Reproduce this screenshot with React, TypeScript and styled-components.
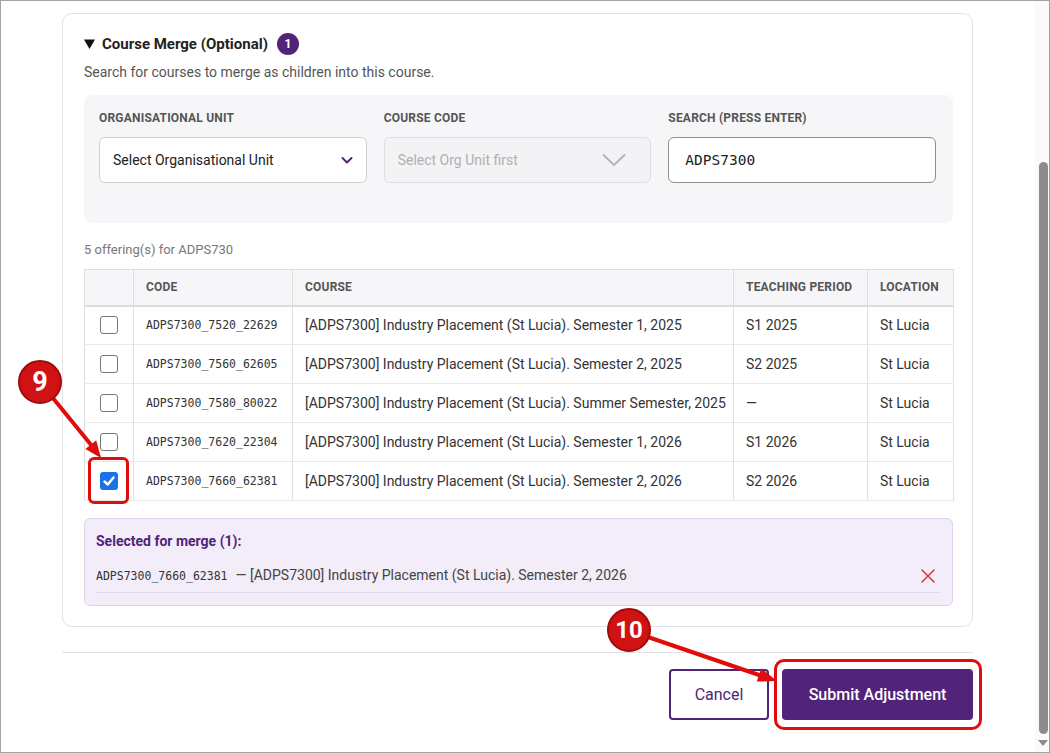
import React from "react";
import styled, { createGlobalStyle, css } from "styled-components";

const GlobalStyle = createGlobalStyle`
  html, body { margin: 0; padding: 0; background: #ffffff; }
  body { font-family: Roboto, "Liberation Sans", Arial, sans-serif; color: #222; }
  * { box-sizing: border-box; }
`;

const PURPLE = "#51247a";
const MONO = `"DejaVu Sans Mono", "Liberation Mono", monospace`;

const Root = styled.div`
  position: relative;
  width: 1050px;
  height: 753px;
  overflow: hidden;
`;

const Window = styled.div`
  width: 1050px;
  height: 753px;
  border: 1px solid #a3a3a3;
  display: flex;
  background: #fff;
`;

const Main = styled.main`
  flex: 1;
  padding: 12px 0 0 61px;
`;

const Scrollbar = styled.div`
  width: 14px;
  background: #fafafa;
  display: flex;
  flex-direction: column;
  align-items: center;
  padding: 161px 0 0 2px;
`;

const Thumb = styled.div`
  width: 9px;
  height: 572px;
  border-radius: 5px;
  background: #8c8c8c;
`;

const DownArrow = styled.div`
  margin-top: 6px;
  width: 0;
  height: 0;
  border-left: 5px solid transparent;
  border-right: 5px solid transparent;
  border-top: 6px solid #8c8c8c;
`;

const Card = styled.section`
  width: 911px;
  border: 1px solid #e2e2e2;
  border-radius: 10px;
  padding: 19px 19px 20px 21px;
`;

const Header = styled.div`
  display: flex;
  align-items: center;
  height: 22px;
`;

const Caret = styled.span`
  display: flex;
  width: 11px;
  margin-right: 7px;
`;

const Title = styled.h3`
  margin: 0;
  font-size: 15px;
  font-weight: 700;
  color: #222;
`;

const CountBadge = styled.span`
  margin-left: 9px;
  width: 22px;
  height: 22px;
  border-radius: 50%;
  background: ${PURPLE};
  color: #fff;
  font-size: 12px;
  font-weight: 700;
  display: flex;
  align-items: center;
  justify-content: center;
`;

const Subtitle = styled.p`
  margin: 7px 0 0;
  font-size: 14px;
  line-height: 20px;
  color: #555;
`;

const FilterPanel = styled.div`
  margin-top: 13px;
  background: #f6f6f9;
  border-radius: 8px;
  padding: 15px 17px 40px 15px;
  display: grid;
  grid-template-columns: repeat(3, 1fr);
  column-gap: 17px;
`;

const Field = styled.div`
  display: flex;
  flex-direction: column;
`;

const Label = styled.label`
  font-size: 12px;
  line-height: 16px;
  font-weight: 700;
  color: #555;
  letter-spacing: 0.2px;
  text-transform: uppercase;
  margin-bottom: 11px;
`;

const SelectBox = styled.div<{ $disabled?: boolean }>`
  height: 46px;
  border-radius: 6px;
  display: flex;
  align-items: center;
  justify-content: space-between;
  padding: 0 12px 0 13px;
  font-size: 14px;
  ${(p) =>
    p.$disabled
      ? css`
          background: #f3f3f5;
          border: 1px solid #dedee2;
          color: #b0b0b0;
          padding-right: 24px;
        `
      : css`
          background: #fff;
          border: 1px solid #cfcfd4;
          color: #222;
        `}
`;

const SearchInput = styled.div`
  height: 46px;
  border-radius: 6px;
  background: #fff;
  border: 1px solid #8e8e8e;
  display: flex;
  align-items: center;
  padding: 0 16px;
  font-family: ${MONO};
  font-size: 14.5px;
  color: #222;
`;

const ResultCount = styled.div`
  margin-top: 20px;
  font-size: 13px;
  line-height: 14px;
  color: #777;
`;

const Table = styled.table`
  margin-top: 12px;
  width: 869px;
  border-collapse: collapse;
  table-layout: fixed;
  border: 1px solid #dedede;
`;

const Th = styled.th`
  height: 36px;
  background: #f6f6f9;
  text-align: left;
  font-size: 12px;
  font-weight: 700;
  color: #555;
  letter-spacing: 0.2px;
  padding: 0 12px;
  border-right: 1px solid #dedede;
  border-bottom: 2px solid #dcdcdc;
`;

const Td = styled.td<{ $mono?: boolean; $center?: boolean }>`
  height: 39px;
  padding: 0 12px;
  font-size: 14px;
  color: #333;
  border-right: 1px solid #e0e0e0;
  border-bottom: 1px solid #e8e8e8;
  white-space: nowrap;
  ${(p) =>
    p.$mono &&
    css`
      font-family: ${MONO};
      font-size: 11.5px;
      color: #333;
    `}
  ${(p) =>
    p.$center &&
    css`
      text-align: center;
      padding: 0;
    `}
`;

const CheckBox = styled.span<{ $checked?: boolean }>`
  display: inline-flex;
  align-items: center;
  justify-content: center;
  width: 18px;
  height: 18px;
  border-radius: 3px;
  vertical-align: middle;
  ${(p) =>
    p.$checked
      ? css`
          background: #1a72e8;
        `
      : css`
          background: #fff;
          border: 1px solid #777;
        `}
`;

const SelectedPanel = styled.div`
  margin-top: 17px;
  background: #f2edf8;
  border: 1px solid #dcd2ea;
  border-radius: 6px;
  padding: 12px 12px 12px 11px;
`;

const SelectedTitle = styled.div`
  font-size: 14px;
  line-height: 20px;
  font-weight: 700;
  color: ${PURPLE};
`;

const SelectedItem = styled.div`
  margin-top: 8px;
  padding: 6px 0;
  border-bottom: 1px solid #e0d9ea;
  display: flex;
  align-items: center;
  justify-content: space-between;
  font-size: 14px;
  line-height: 20px;
  color: #444;
`;

const Code = styled.span`
  font-family: ${MONO};
  font-size: 11.5px;
  color: #333;
  margin-right: 8px;
`;

const RemoveButton = styled.button`
  border: 0;
  background: none;
  padding: 0;
  margin-right: 4px;
  display: flex;
  cursor: pointer;
`;

const Footer = styled.footer`
  width: 911px;
  margin-top: 25px;
  border-top: 1px solid #e2e2e2;
  padding-top: 16px;
  display: flex;
  justify-content: flex-end;
  gap: 13px;
`;

const Button = styled.button<{ $primary?: boolean }>`
  height: 51px;
  border-radius: 4px;
  font-family: Roboto, "Liberation Sans", sans-serif;
  font-size: 16px;
  cursor: pointer;
  ${(p) =>
    p.$primary
      ? css`
          width: 191px;
          background: ${PURPLE};
          border: 0;
          color: #fff;
          font-weight: 500;
        `
      : css`
          width: 100px;
          background: #fff;
          border: 2px solid ${PURPLE};
          color: ${PURPLE};
          font-weight: 400;
        `}
`;

/* Annotation overlays */
const Overlay = styled.svg`
  position: absolute;
  left: 0;
  top: 0;
  pointer-events: none;
`;

const StepMarker = styled.div<{ $x: number; $y: number; $size: number }>`
  position: absolute;
  left: ${(p) => p.$x}px;
  top: ${(p) => p.$y}px;
  width: 44px;
  height: 44px;
  border-radius: 50%;
  background: #d11212;
  border: 2px solid #9c0c0c;
  color: #fff;
  font-family: Roboto, "Liberation Sans", sans-serif;
  font-size: ${(p) => p.$size}px;
  font-weight: 700;
  display: flex;
  align-items: center;
  justify-content: center;
  pointer-events: none;
`;

const Highlight = styled.div<{ $x: number; $y: number; $w: number; $h: number; $r: number }>`
  position: absolute;
  left: ${(p) => p.$x}px;
  top: ${(p) => p.$y}px;
  width: ${(p) => p.$w}px;
  height: ${(p) => p.$h}px;
  border: 3px solid #e00d0d;
  border-radius: ${(p) => p.$r}px;
  pointer-events: none;
`;

const rows = [
  { code: "ADPS7300_7520_22629", course: "[ADPS7300] Industry Placement (St Lucia). Semester 1, 2025", period: "S1 2025", checked: false },
  { code: "ADPS7300_7560_62605", course: "[ADPS7300] Industry Placement (St Lucia). Semester 2, 2025", period: "S2 2025", checked: false },
  { code: "ADPS7300_7580_80022", course: "[ADPS7300] Industry Placement (St Lucia). Summer Semester, 2025", period: "—", checked: false },
  { code: "ADPS7300_7620_22304", course: "[ADPS7300] Industry Placement (St Lucia). Semester 1, 2026", period: "S1 2026", checked: false },
  { code: "ADPS7300_7660_62381", course: "[ADPS7300] Industry Placement (St Lucia). Semester 2, 2026", period: "S2 2026", checked: true },
];

export default function App() {
  return (
    <Root>
      <GlobalStyle />
      <Window>
        <Main>
          <Card>
            <Header>
              <Caret>
                <svg width="11" height="10" viewBox="0 0 11 10">
                  <polygon points="0,0.5 11,0.5 5.5,10" fill="#111" />
                </svg>
              </Caret>
              <Title>Course Merge (Optional)</Title>
              <CountBadge>1</CountBadge>
            </Header>
            <Subtitle>Search for courses to merge as children into this course.</Subtitle>

            <FilterPanel>
              <Field>
                <Label>Organisational Unit</Label>
                <SelectBox>
                  <span>Select Organisational Unit</span>
                  <svg width="14" height="14" viewBox="0 0 14 14">
                    <polyline points="2.5,5 7,9.5 11.5,5" fill="none" stroke={PURPLE} strokeWidth="2" strokeLinecap="round" strokeLinejoin="round" />
                  </svg>
                </SelectBox>
              </Field>
              <Field>
                <Label>Course Code</Label>
                <SelectBox $disabled>
                  <span>Select Org Unit first</span>
                  <svg width="24" height="14" viewBox="0 0 24 14">
                    <polyline points="1.5,2 12,12 22.5,2" fill="none" stroke="#b5b5b8" strokeWidth="2" strokeLinecap="round" strokeLinejoin="round" />
                  </svg>
                </SelectBox>
              </Field>
              <Field>
                <Label>Search (press Enter)</Label>
                <SearchInput>ADPS7300</SearchInput>
              </Field>
            </FilterPanel>

            <ResultCount>5 offering(s) for ADPS730</ResultCount>

            <Table>
              <colgroup>
                <col style={{ width: 49 }} />
                <col style={{ width: 159 }} />
                <col style={{ width: 441 }} />
                <col style={{ width: 134 }} />
                <col style={{ width: 86 }} />
              </colgroup>
              <thead>
                <tr>
                  <Th />
                  <Th>CODE</Th>
                  <Th>COURSE</Th>
                  <Th>TEACHING PERIOD</Th>
                  <Th>LOCATION</Th>
                </tr>
              </thead>
              <tbody>
                {rows.map((r) => (
                  <tr key={r.code}>
                    <Td $center>
                      <CheckBox $checked={r.checked}>
                        {r.checked && (
                          <svg width="14" height="14" viewBox="0 0 14 14">
                            <polyline points="2.5,7.5 5.8,10.5 11.5,3.5" fill="none" stroke="#fff" strokeWidth="2.4" strokeLinecap="round" strokeLinejoin="round" />
                          </svg>
                        )}
                      </CheckBox>
                    </Td>
                    <Td $mono>{r.code}</Td>
                    <Td>{r.course}</Td>
                    <Td>{r.period}</Td>
                    <Td>St Lucia</Td>
                  </tr>
                ))}
              </tbody>
            </Table>

            <SelectedPanel>
              <SelectedTitle>Selected for merge (1):</SelectedTitle>
              <SelectedItem>
                <span>
                  <Code>ADPS7300_7660_62381</Code>
                  {"— [ADPS7300] Industry Placement (St Lucia). Semester 2, 2026"}
                </span>
                <RemoveButton aria-label="Remove">
                  <svg width="16" height="16" viewBox="0 0 16 16">
                    <path d="M2 2 L14 14 M14 2 L2 14" stroke="#d23a3a" strokeWidth="1.5" strokeLinecap="round" />
                  </svg>
                </RemoveButton>
              </SelectedItem>
            </SelectedPanel>
          </Card>

          <Footer>
            <Button>Cancel</Button>
            <Button $primary>Submit Adjustment</Button>
          </Footer>
        </Main>
        <Scrollbar>
          <Thumb />
          <DownArrow />
        </Scrollbar>
      </Window>

      <Overlay width="1050" height="753" viewBox="0 0 1050 753">
        <line x1="48" y1="392" x2="92" y2="446" stroke="#e00d0d" strokeWidth="4" strokeLinecap="round" />
        <polygon points="101,458 85.4,449.1 96.2,440.2" fill="#e00d0d" />
        <line x1="645" y1="636" x2="762" y2="676" stroke="#e00d0d" strokeWidth="4" strokeLinecap="round" />
        <polygon points="777,681 756.7,681.6 761.3,668.4" fill="#e00d0d" />
      </Overlay>
      <Highlight $x={88} $y={457} $w={41} $h={47} $r={6} />
      <Highlight $x={774} $y={659} $w={208} $h={71} $r={10} />
      <StepMarker $x={18} $y={360} $size={27}>9</StepMarker>
      <StepMarker $x={607} $y={608} $size={24}>10</StepMarker>
    </Root>
  );
}
